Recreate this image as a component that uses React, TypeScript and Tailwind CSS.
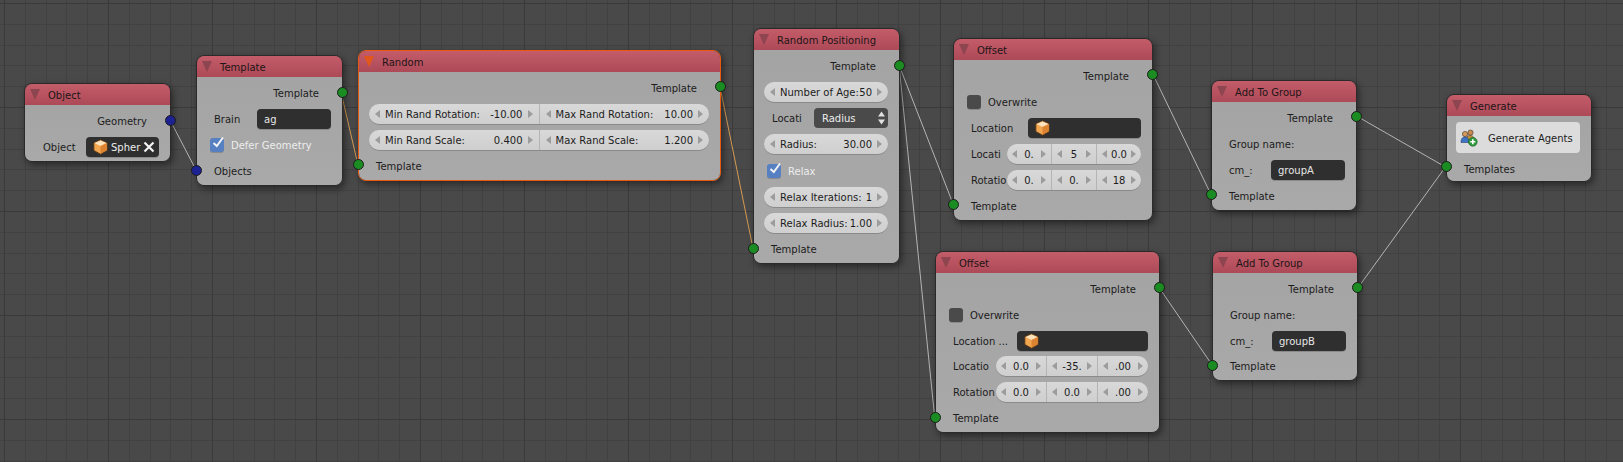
import type { PropsWithChildren, ReactNode } from 'react';

type SocketProps = { className: string; blue?: boolean };

function Socket({ className, blue }: SocketProps) {
  return (
    <span
      className={`absolute z-10 h-[11px] w-[11px] rounded-full border border-[#1c1c1c] ${blue ? 'bg-[#1c2291]' : 'bg-[#1a8c22]'} ${className}`}
    />
  );
}

// Blender's hinted text sits a pixel lower than the browser centres it.
function T({ className = '', children }: PropsWithChildren<{ className?: string }>) {
  return <span className={`pt-[2px] ${className}`}>{children}</span>;
}

type NodeProps = PropsWithChildren<{
  title: string;
  className: string;
  selected?: boolean;
  bodyClassName?: string;
}>;

function Node({ title, className, selected, bodyClassName = 'gap-[6px] pb-[4px]', children }: NodeProps) {
  return (
    <div
      className={`absolute rounded-[8px] border shadow-[2px_3px_7px_rgba(0,0,0,0.45)] ${selected ? 'border-[#e8590f]' : 'border-[#2a2a2a]'} ${className}`}>
      <div className="flex h-[21px] items-center rounded-t-[7px] bg-gradient-to-b from-[#c45c69] to-[#ad4a58] pl-[5px] text-[#1d1517]">
        <svg width="10" height="11" viewBox="0 0 10 11" className="mr-[8px] shrink-0">
          <path d="M0 0H10L5 11Z" fill={selected ? '#e2571c' : '#8d4550'} />
        </svg>
        <T>{title}</T>
      </div>
      <div
        className={`flex flex-col rounded-b-[7px] bg-gradient-to-b from-[#a4a4a4] to-[#a9a9a9] pt-[6px] pl-[10px] pr-[11px] ${bodyClassName}`}>
        {children}
      </div>
    </div>
  );
}

function Row({ className = '', children }: PropsWithChildren<{ className?: string }>) {
  return <div className={`flex h-[20px] items-center whitespace-nowrap ${className}`}>{children}</div>;
}

function Output({ children = 'Template' }: { children?: ReactNode }) {
  return (
    <Row className="justify-end pr-[12px]">
      <T>{children}</T>
    </Row>
  );
}

function Input({ children = 'Template' }: { children?: ReactNode }) {
  return (
    <Row className="pl-[7px]">
      <T>{children}</T>
    </Row>
  );
}

function Arrow({ right }: { right?: boolean }) {
  return (
    <svg width="5" height="8" viewBox="0 0 5 8" className="shrink-0">
      <path d={right ? 'M0 0L5 4L0 8Z' : 'M5 0L0 4L5 8Z'} fill="#9c9c9c" />
    </svg>
  );
}

function Segment({ label, value }: { label?: string; value: string }) {
  return (
    <div className={`flex min-w-0 flex-1 items-center ${label ? 'gap-[5px] px-[6px]' : 'gap-[3px] px-[5px]'}`}>
      <Arrow />
      <div
        className={`flex min-w-0 flex-1 overflow-hidden pt-[2px] whitespace-nowrap ${label ? 'justify-between' : 'justify-center'}`}>
        {label && <span>{label}</span>}
        <span>{value}</span>
      </div>
      <Arrow right />
    </div>
  );
}

function Pill({ className = '', children }: PropsWithChildren<{ className?: string }>) {
  return (
    <div
      className={`flex h-[20px] min-w-0 items-stretch divide-x divide-[#b4b4b4] rounded-full bg-gradient-to-b from-[#d9d9d9] to-[#cfcfcf] shadow-[0_1px_0_#8a8a8a] ${className}`}>
      {children}
    </div>
  );
}

function CubeIcon() {
  return (
    <svg width="15" height="16" viewBox="0 0 14 15" className="shrink-0">
      <path d="M7 0.8L13.2 3.6V10.8L7 14.2L0.8 10.8V3.6Z" fill="#f3a650" stroke="#5b3a18" strokeWidth="0.8" />
      <path d="M7 1.4L12.6 3.8L7 6.6L1.4 3.8Z" fill="#fde3bd" />
      <path d="M7 6.6V13.8L12.8 10.6V3.9Z" fill="#dc8230" />
    </svg>
  );
}

function AgentsIcon() {
  return (
    <svg width="18" height="18" viewBox="0 0 18 18" className="shrink-0">
      <circle cx="5" cy="5" r="2.6" fill="#d99a5c" stroke="#3d3222" strokeWidth="0.6" />
      <circle cx="10.5" cy="3.6" r="2.6" fill="#c98a4e" stroke="#3d3222" strokeWidth="0.6" />
      <path d="M7 7.5C10 5.5 14 6.5 14 10V11H7Z" fill="#c8903a" stroke="#3d3222" strokeWidth="0.6" />
      <path d="M1 13.5C1 9 3 8 5 8C7 8 9 9 9 13.5Z" fill="#3f74c4" stroke="#23406e" strokeWidth="0.6" />
      <circle cx="12.8" cy="12.8" r="4.4" fill="#2f9a3e" stroke="#1b5e25" strokeWidth="0.6" />
      <path d="M12.8 10.3V15.3M10.3 12.8H15.3" stroke="#fff" strokeWidth="1.6" />
    </svg>
  );
}

function Checkbox({ checked }: { checked?: boolean }) {
  return (
    <span
      className={`relative mr-[7px] ml-[3px] h-[14px] w-[14px] shrink-0 rounded-[3px] shadow-[0_1px_0_#8a8a8a] ${checked ? 'bg-[#5680c2]' : 'bg-[#4a4a4a]'}`}>
      {checked && (
        <svg width="16" height="16" viewBox="0 0 16 16" className="absolute -top-[3px] left-0">
          <path d="M3.5 8L6.8 11L13 2.5" fill="none" stroke="#f2f2f2" strokeWidth="2" />
        </svg>
      )}
    </span>
  );
}

function TextField({ className = '', children }: PropsWithChildren<{ className?: string }>) {
  return (
    <div
      className={`flex h-[20px] min-w-0 items-center rounded-[4px] bg-[#2f2f2f] pl-[7px] text-[#e6e6e6] shadow-[0_1px_0_#8a8a8a] ${className}`}>
      {children}
    </div>
  );
}

function OffsetRow({ label, labelClassName, values }: { label: string; labelClassName: string; values: string[] }) {
  return (
    <Row className="pl-[7px]">
      <T className={`shrink-0 overflow-hidden ${labelClassName}`}>{label}</T>
      <Pill className="flex-1">
        {values.map((value, i) => (
          <Segment key={i} value={value} />
        ))}
      </Pill>
    </Row>
  );
}

const grayWires = [
  'M170 120L196 170',
  'M899 65L953.5 205',
  'M899 65L934.7 417.5',
  'M1153 74.5L1211 194.5',
  'M1159 287.5L1212.5 365.5',
  'M1356.5 116L1445.5 167',
  'M1358 287.7L1445.5 167',
];

const orangeWires = ['M341 92L358 165', 'M720 87L753 248.5'];

function Backdrop() {
  return (
    <svg width="1623" height="462" className="absolute inset-0">
      <defs>
        <pattern id="grid" x="4" y="3" width="104" height="104" patternUnits="userSpaceOnUse">
          {[21, 42, 62, 83].map((p) => (
            <g key={p} fill="#414141">
              <rect x={p} y="0" width="1" height="104" />
              <rect x="0" y={p} width="104" height="1" />
            </g>
          ))}
          <rect x="0" y="0" width="1" height="104" fill="#3a3a3a" />
          <rect x="0" y="0" width="104" height="1" fill="#3a3a3a" />
        </pattern>
      </defs>
      <rect width="1623" height="462" fill="url(#grid)" />
      {grayWires.map((d) => (
        <path key={d} d={d} stroke="#b4b4b4" strokeWidth="1" fill="none" />
      ))}
      {orangeWires.map((d) => (
        <path key={d} d={d} stroke="#d59a52" strokeWidth="1" fill="none" />
      ))}
    </svg>
  );
}

export default function App() {
  return (
    <div className="relative h-[462px] w-[1623px] overflow-hidden bg-[#494949] font-['DejaVu_Sans',sans-serif] text-[10px] leading-[12px] text-[#1c1c1c]">
      <Backdrop />

      <Node title="Object" className="top-[83px] left-[24px] w-[147px]">
        <Output>Geometry</Output>
        <Row>
          <T className="w-[51px] shrink-0 pl-[8px]">Object</T>
          <TextField className="flex-1 gap-[3px] pr-[4px] pl-[4px] text-[#ededed]">
            <CubeIcon />
            <T className="flex-1">Spher</T>
            <svg width="12" height="12" viewBox="0 0 12 12" className="shrink-0">
              <path d="M1.5 1.5L10.5 10.5M10.5 1.5L1.5 10.5" stroke="#f2f2f2" strokeWidth="2.2" />
            </svg>
          </TextField>
        </Row>
        <Socket blue className="top-[31px] -right-[6px]" />
      </Node>

      <Node title="Template" className="top-[55px] left-[196px] w-[147px]">
        <Output />
        <Row className="pl-[7px]">
          <T className="w-[43px] shrink-0">Brain</T>
          <TextField className="flex-1">
            <T>ag</T>
          </TextField>
        </Row>
        <Row className="text-[#ededed]">
          <Checkbox checked />
          <T>Defer Geometry</T>
        </Row>
        <Input>Objects</Input>
        <Socket className="top-[31px] -right-[6px]" />
        <Socket blue className="top-[109px] -left-[6px]" />
      </Node>

      <Node selected title="Random" className="top-[50px] left-[358px] w-[363px]">
        <Output />
        <Pill>
          <Segment label="Min Rand Rotation:" value="-10.00" />
          <Segment label="Max Rand Rotation:" value="10.00" />
        </Pill>
        <Pill>
          <Segment label="Min Rand Scale:" value="0.400" />
          <Segment label="Max Rand Scale:" value="1.200" />
        </Pill>
        <Input />
        <Socket className="top-[30px] -right-[6px]" />
        <Socket className="top-[108px] -left-[6px]" />
      </Node>

      <Node title="Random Positioning" className="top-[28px] left-[753px] w-[147px]" bodyClassName="gap-[6.15px] pb-[4px]">
        <Output />
        <Pill>
          <Segment label="Number of Age:" value="50" />
        </Pill>
        <Row className="pl-[8px]">
          <T className="w-[42px] shrink-0">Locati</T>
          <div className="flex h-[20px] flex-1 items-center justify-between rounded-[4px] bg-[#4a4a4a] pr-[3px] pl-[8px] text-[#ededed]">
            <T>Radius</T>
            <svg width="7" height="14" viewBox="0 0 7 14">
              <path d="M3.5 0.5L7 5.5H0ZM3.5 13.5L0 8.5H7Z" fill="#e0e0e0" />
            </svg>
          </div>
        </Row>
        <Pill>
          <Segment label="Radius:" value="30.00" />
        </Pill>
        <Row className="text-[#ededed]">
          <Checkbox checked />
          <T>Relax</T>
        </Row>
        <Pill>
          <Segment label="Relax Iterations:" value="1" />
        </Pill>
        <Pill>
          <Segment label="Relax Radius:" value="1.00" />
        </Pill>
        <Input />
        <Socket className="top-[31px] -right-[6px]" />
        <Socket className="top-[214px] -left-[6px]" />
      </Node>

      <Node title="Offset" className="top-[38px] left-[953px] w-[200px]">
        <Output />
        <Row>
          <Checkbox />
          <T>Overwrite</T>
        </Row>
        <Row className="pl-[7px]">
          <T className="w-[57px] shrink-0">Location</T>
          <TextField className="flex-1 pl-[6px]">
            <CubeIcon />
          </TextField>
        </Row>
        <OffsetRow label="Locati" labelClassName="w-[36px]" values={['0.', '5', '0.0']} />
        <OffsetRow label="Rotatio" labelClassName="w-[36px]" values={['0.', '0.', '18']} />
        <Input />
        <Socket className="top-[30px] -right-[6px]" />
        <Socket className="top-[160px] -left-[6px]" />
      </Node>

      <Node title="Offset" className="top-[251px] left-[935px] w-[225px]" bodyClassName="gap-[5.75px] pb-[4px]">
        <Output />
        <Row>
          <Checkbox />
          <T>Overwrite</T>
        </Row>
        <Row className="pl-[7px]">
          <T className="w-[64px] shrink-0">Location ...</T>
          <TextField className="flex-1 pl-[6px]">
            <CubeIcon />
          </TextField>
        </Row>
        <OffsetRow label="Locatio" labelClassName="w-[43px]" values={['0.0', '-35.', '.00']} />
        <OffsetRow label="Rotation" labelClassName="w-[43px]" values={['0.0', '0.0', '.00']} />
        <Input />
        <Socket className="top-[30px] -right-[6px]" />
        <Socket className="top-[160px] -left-[6px]" />
      </Node>

      <Node title="Add To Group" className="top-[80px] left-[1211px] w-[146px]">
        <Output />
        <Input>Group name:</Input>
        <Row className="pl-[7px]">
          <T className="w-[42px] shrink-0">cm_:</T>
          <TextField className="flex-1">
            <T>groupA</T>
          </TextField>
        </Row>
        <Input />
        <Socket className="top-[30px] -right-[6px]" />
        <Socket className="top-[108px] -left-[6px]" />
      </Node>

      <Node title="Add To Group" className="top-[251px] left-[1212px] w-[146px]" bodyClassName="gap-[5.75px] pb-[4px]">
        <Output />
        <Input>Group name:</Input>
        <Row className="pl-[7px]">
          <T className="w-[42px] shrink-0">cm_:</T>
          <TextField className="flex-1">
            <T>groupB</T>
          </TextField>
        </Row>
        <Input />
        <Socket className="top-[30px] -right-[6px]" />
        <Socket className="top-[108px] -left-[6px]" />
      </Node>

      <Node title="Generate" className="top-[94px] left-[1446px] w-[146px]" bodyClassName="gap-[6px] pb-[2px]">
        <div className="-ml-[1px] flex h-[31px] items-center rounded-[4px] bg-[#dcdcdc] pl-[4px]">
          <AgentsIcon />
          <T className="ml-[10px] whitespace-nowrap">Generate Agents</T>
        </div>
        <Input>Templates</Input>
        <Socket className="top-[66px] -left-[6px]" />
      </Node>
    </div>
  );
}
